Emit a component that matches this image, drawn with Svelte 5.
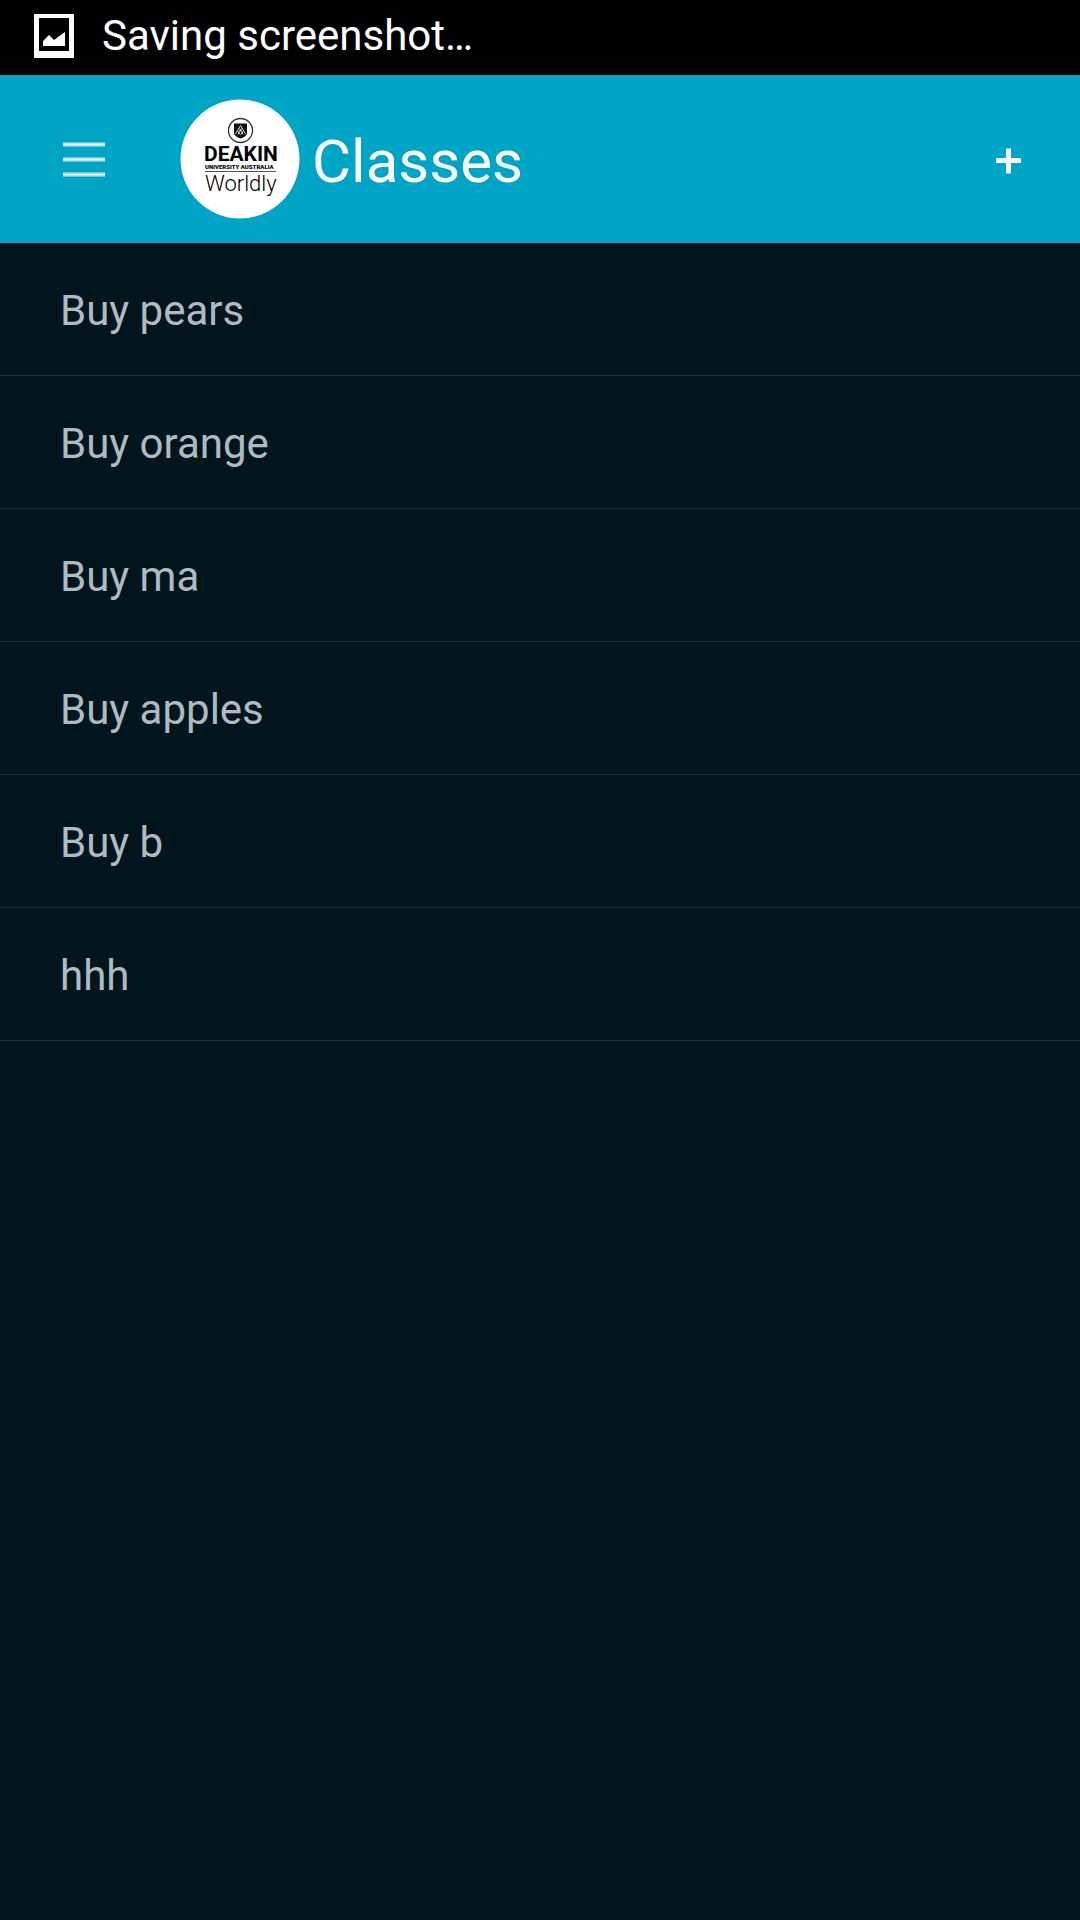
<script>
  const items = ['Buy pears', 'Buy orange', 'Buy ma', 'Buy apples', 'Buy b', 'hhh'];
</script>

<div class="screen">
  <div class="status" role="status">
    <svg class="picture" viewBox="0 0 40 44" aria-hidden="true">
      <path fill="#fff" fill-rule="evenodd" d="M0 0H40V44H0ZM5 4V37H35V4Z" />
      <path fill="#fff" d="M9 32V27L15 21L20 26L31 18V32Z" />
    </svg>
    <span>Saving screenshot…</span>
  </div>

  <header class="bar">
    <button class="icon-button menu" type="button" aria-label="Menu">
      <svg viewBox="0 0 42 36" aria-hidden="true">
        <path d="M0 3.5H42M0 18.5H42M0 33.5H42" stroke="#fff" stroke-opacity=".4" stroke-width="5" />
        <path d="M0 3.5H42M0 18.5H42M0 33.5H42" stroke="#fff" stroke-opacity=".5" stroke-width="3" />
        <path d="M0 3.5H42M0 18.5H42M0 33.5H42" stroke="#fff" stroke-width="1" />
      </svg>
    </button>

    <svg class="logo" viewBox="0 0 120 120" role="img" aria-label="Deakin University Australia Worldly">
      <circle cx="60" cy="60" r="59.5" fill="#fff" />
      <circle cx="60.5" cy="31.5" r="12" fill="#fff" stroke="#333" stroke-width="1.3" />
      <path fill="#111" d="M54 24.5H67V34Q66.5 37.5 60.5 39.5Q54.5 37.5 54 34Z" />
      <path
        d="M55.5 35L60.5 26.5L65.5 35M58 35.5L60.5 31L63 35.5M57.5 32.5L60.5 35.5L63.5 32.5M59 29.5L62 32.5M62 29.5L59 32.5"
        fill="none"
        stroke="#fff"
        stroke-width=".8"
      />
      <text class="name" x="24" y="62">DEAKIN</text>
      <text class="sub" x="25" y="70">UNIVERSITY AUSTRALIA</text>
      <path d="M25 72.5H96" stroke="#555" stroke-width="1" />
      <text class="tag" x="25" y="92">Worldly</text>
    </svg>

    <h1>Classes</h1>

    <button class="icon-button add" type="button" aria-label="Add">
      <svg viewBox="0 0 26 26" aria-hidden="true">
        <path d="M13.5 0.5V25.5M1 12.5H26" stroke="#fafafa" stroke-width="5" />
      </svg>
    </button>
  </header>

  <main>
    <ul>
      {#each items as item}
        <li>{item}</li>
      {/each}
    </ul>
  </main>
</div>

<style>
  :global(body) {
    margin: 0;
    background: #00161c;
  }

  .screen {
    min-height: 100vh;
    background: #00161c;
    font-family: Roboto, 'Liberation Sans', sans-serif;
  }

  .status {
    display: flex;
    align-items: center;
    gap: 28px;
    box-sizing: border-box;
    height: 75px;
    padding: 0 34px 4px;
    background: #000;
    color: #fff;
    font-size: 42px;
    line-height: 48px;
  }

  .picture {
    width: 40px;
    height: 44px;
  }

  .bar {
    display: flex;
    align-items: center;
    height: 168px;
    padding: 0 24px;
    background: #00a5c5;
    color: #fafafa;
  }

  .icon-button {
    display: flex;
    align-items: center;
    justify-content: center;
    height: 120px;
    padding: 0;
    border: 0;
    background: none;
    cursor: pointer;
  }

  .menu {
    width: 120px;
  }

  .menu svg {
    width: 42px;
    height: 36px;
  }

  .add {
    box-sizing: border-box;
    width: 96px;
    margin-left: auto;
    padding-top: 4px;
  }

  .add svg {
    width: 26px;
    height: 26px;
  }

  .logo {
    flex: none;
    width: 120px;
    height: 120px;
    margin-left: 36px;
  }

  .name {
    font: 700 21px Roboto, sans-serif;
  }

  .sub {
    font: 900 6px Roboto, sans-serif;
  }

  .tag {
    font: 300 22px Roboto, sans-serif;
  }

  h1 {
    margin: 0 0 0 12px;
    padding-top: 5px;
    font-size: 60px;
    font-weight: 400;
    line-height: 72px;
  }

  ul {
    margin: 0;
    padding: 0;
    list-style: none;
  }

  li {
    padding: 43px 60px 39px;
    border-bottom: 1px solid #1c2e34;
    color: #b0bbc1;
    font-size: 42px;
    line-height: 50px;
  }
</style>
